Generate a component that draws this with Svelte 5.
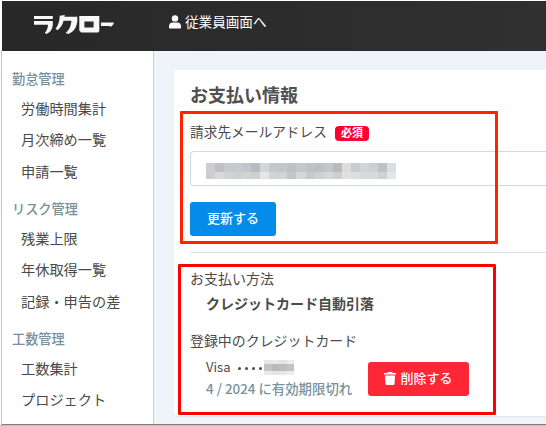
<script lang="ts">
    const groups = [
        { title: "勤怠管理", items: ["労働時間集計", "月次締め一覧", "申請一覧"] },
        { title: "リスク管理", items: ["残業上限", "年休取得一覧", "記録・申告の差"] },
        { title: "工数管理", items: ["工数集計", "プロジェクト"] },
    ];

    // mosaic over the private parts, one array per row
    const mailMosaic = [
        ["#cbcdcf", "#bdc1c3", "#c7c8cb", "#c7c9cc", "#c3c6c9", "#b9bbbf", "#d3d5d8", "#c3c8cb", "#c2c6c9", "#bdc1c5", "#c5c7ca", "#bfc3c6", "#bcc0c3", "#c3c5c8", "#b7bbbe", "#dcdedd", "#cccccf", "#d2d5d6", "#cdced1", "#bfc1c5", "#dcdde0"],
        ["#cbcdce", "#d9d8db", "#d1d3d3", "#cecfd1", "#d2d4d4", "#cecfd1", "#e5e5e8", "#cfd4d6", "#d0d4d6", "#c2c6c8", "#d5d8d9", "#c7cacc", "#cfd0d2", "#d5d7d7", "#cdced1", "#dfe0df", "#dcdfde", "#d8dad9", "#d8d9d9", "#d0d1d4", "#e1e6e8"],
    ];
    const cardMosaic = [
        ["#e6e6e6", "#e9e9e9", "#e4e4e4", "#ececec"],
        ["#c4c4c4", "#b9b9b9", "#bebebe", "#c3c3c3"],
        ["#eaeaea", "#e4e4e4", "#e7e7e7", "#ededed"],
    ];
</script>

<div class="window">
    <header>
        <div class="brand">
            <svg class="logo" width="81" height="20" viewBox="0 0 81 20" role="img" aria-label="ラクロー">
                <g fill="#f7f7f7">
                    <path d="M0 1H18.8V4H0z" />
                    <path d="M0 6H18.8V10C18.3 14.5 16.2 17.5 12.5 19L10.8 18C13 15.5 13.8 13 14 9.8H0z" />
                    <path d="M25.8 .8L30.8 0L30.4 1.8H43.3V6C42.8 12 40 17 34.2 19L31.6 18C35.4 14.7 37 11.2 37.4 5.8H29.6C28.6 10 26.4 13 23.6 15.2L21.6 13.8C24.4 10 25.4 6.5 25.8 .8z" />
                    <path fill-rule="evenodd" d="M45.3 1H65.3V16.3L64 17.5H47.2L45.3 15.5zM50.4 6.5V12.5H59.6V6.5z" />
                    <path d="M67 7.4H80C79.4 9.6 78.2 11.2 76.2 11.8L75.4 11H67z" />
                </g>
            </svg>
        </div>
        <a class="switch" href="#employee">
            <svg width="12" height="14" viewBox="0 0 12 14" aria-hidden="true">
                <circle cx="6" cy="3.4" r="3.2" fill="#fff" />
                <path d="M3.6 7.6H8.4C10.6 7.6 12 9.2 12 11.2V12.4C12 13.2 11.6 13.6 10.8 13.6H1.2C.4 13.6 0 13.2 0 12.4V11.2C0 9.2 1.4 7.6 3.6 7.6z" fill="#fff" />
            </svg>
            <span>従業員画面へ</span>
        </a>
    </header>
    <div class="body">
        <nav>
            {#each groups as group}
                <section>
                    <h2>{group.title}</h2>
                    <ul>
                        {#each group.items as item}
                            <li>{item}</li>
                        {/each}
                    </ul>
                </section>
            {/each}
        </nav>
        <main>
            <div class="card">
                <h1>お支払い情報</h1>
                <div class="label">請求先メールアドレス<span class="badge">必須</span></div>
                <div class="field">
                    <div class="mosaic mail">
                        {#each mailMosaic as row}
                            {#each row as color}<i style="background: {color}"></i>{/each}
                        {/each}
                    </div>
                </div>
                <button class="update">更新する</button>
                <hr />
                <div class="method">お支払い方法</div>
                <div class="value">クレジットカード自動引落</div>
                <div class="registered">登録中のクレジットカード</div>
                <div class="credit">
                    <div class="info">
                        <div class="number">
                            <span class="brandname">Visa</span>
                            <span class="dots"><b></b><b></b><b></b><b></b></span>
                            <div class="mosaic digits">
                                {#each cardMosaic as row}
                                    {#each row as color}<i style="background: {color}"></i>{/each}
                                {/each}
                            </div>
                        </div>
                        <div class="expiry">4 / 2024 に有効期限切れ</div>
                    </div>
                    <button class="delete">
                        <svg width="12" height="13" viewBox="0 0 12 13" aria-hidden="true">
                            <path d="M0 .9H3.3L3.9 0H8.1L8.7 .9H12V2.6H0zM.9 3.4H11.1L10.5 12C10.4 12.7 10 13 9.4 13H2.6C2 13 1.6 12.7 1.5 12z" fill="#fff" />
                        </svg>
                        <span>削除する</span>
                    </button>
                </div>
            </div>
        </main>
    </div>
    <div class="mark mark-mail"></div>
    <div class="mark mark-card"></div>
</div>

<style>
:global(body) {
    margin: 0;
    background: #fff;
}
.window {
    position: relative;
    box-sizing: border-box;
    width: 546px;
    height: 426px;
    padding: 1px 0 0 1px;
    border-bottom: 1px solid #c4c4c4;
    overflow: hidden;
    display: flex;
    flex-direction: column;
    font-family: "Noto Sans CJK JP", "Noto Sans", sans-serif;
    color: #4a4a4a;
}
header {
    flex: none;
    height: 50px;
    margin-left: 1px;
    display: flex;
    background: linear-gradient(90deg, #282828, #303030);
}
.brand {
    width: 167px;
}
.logo {
    display: block;
    margin: 14px 0 0 32px;
}
.switch {
    display: flex;
    gap: 4px;
    height: 39px;
    align-items: center;
    color: #fff;
    font-size: 13.6px;
    line-height: 20px;
    text-decoration: none;
}
.switch svg {
    margin-top: 3px;
}
.body {
    flex: 1;
    min-height: 0;
    display: flex;
    border-left: 1px solid #c4c4c4;
    border-bottom: 1px solid #808080;
}
nav {
    flex: none;
    box-sizing: border-box;
    width: 152px;
    padding: 18px 0 0 10px;
    border-right: 1px solid #ccc;
    background: #fff;
    overflow: hidden;
}
section {
    height: 130px;
}
h2 {
    margin: 0;
    font-size: 13.2px;
    font-weight: 500;
    line-height: 20px;
    color: #78909c;
}
ul {
    margin: 4px 0 0;
    padding: 0 0 0 9px;
    list-style: none;
}
li {
    height: 31.3px;
    font-size: 14.2px;
    line-height: 30px;
    white-space: nowrap;
}
main {
    flex: 1;
    min-width: 0;
    padding: 19px 0 0 20px;
    background: #eff4f8;
}
.card {
    box-sizing: border-box;
    height: 346px;
    padding: 11px 0 0 16px;
    border-radius: 4px 0 0 4px;
    background: #fff;
    box-shadow: 0 1px 1px #dfe5e9;
}
h1 {
    margin: 0;
    font-size: 18px;
    font-weight: 700;
    line-height: 27px;
    color: #505050;
}
.label {
    display: flex;
    align-items: center;
    height: 20px;
    margin-top: 13px;
    font-size: 13.7px;
    line-height: 20px;
}
.badge {
    width: 34px;
    height: 15px;
    margin: 5px 0 0 8px;
    border-radius: 4px;
    background: #ff0033;
    color: #fff;
    font-size: 11px;
    font-weight: 700;
    line-height: 13px;
    text-align: center;
}
.field {
    box-sizing: border-box;
    height: 35px;
    margin-top: 10px;
    padding: 11px 0 0 15px;
    border: 1px solid #cbdce0;
    border-right: none;
    border-radius: 4px 0 0 4px;
}
.mosaic {
    display: grid;
}
.mail {
    width: 190px;
    grid-template-columns: repeat(21, 1fr);
    grid-template-rows: 9px 7px;
}
button {
    display: flex;
    align-items: center;
    justify-content: center;
    box-sizing: border-box;
    height: 34px;
    padding: 0 0 2px;
    border: none;
    border-radius: 3px;
    color: #fff;
    font: 500 13px/20px "Noto Sans CJK JP", sans-serif;
}
.update {
    width: 86px;
    margin-top: 16px;
    background: #038ce9;
}
hr {
    height: 1px;
    margin: 16px 0 0;
    border: none;
    background: #d3e2e5;
}
.method, .value, .registered {
    height: 20px;
    font-size: 14px;
    line-height: 20px;
}
.method {
    margin-top: 15px;
}
.value {
    margin: 5px 0 0 16px;
    font-weight: 700;
}
.registered {
    margin-top: 17px;
    font-size: 13.95px;
}
.credit {
    display: flex;
    align-items: flex-start;
    margin: 10px 0 0 16px;
}
.info {
    width: 162px;
}
.number {
    display: flex;
    height: 18px;
    font-size: 13px;
    line-height: 14px;
}
.brandname {
    width: 23px;
}
.dots {
    display: flex;
    gap: 4px;
    margin: 7px 2px 0 9px;
}
.dots b {
    width: 3px;
    height: 3px;
    border-radius: 50%;
    background: #4a4a4a;
}
.digits {
    width: 30px;
    height: 15px;
    grid-template-columns: repeat(4, 1fr);
    grid-template-rows: 4px 7px 4px;
}
.expiry {
    font-size: 13.4px;
    font-weight: 500;
    line-height: 20px;
    color: #78929b;
    white-space: nowrap;
}
.delete {
    gap: 4px;
    width: 101px;
    margin-top: 2px;
    background: #ff2636;
}
/* highlight frames drawn over the page */
.mark {
    position: absolute;
    box-sizing: border-box;
    width: 318px;
    border: 3px solid #ff2300;
    border-radius: 1px;
}
.mark-mail {
    left: 180px;
    top: 111px;
    height: 133px;
}
.mark-card {
    left: 178px;
    top: 264px;
    height: 151px;
    border-color: #ff0000;
}
</style>
